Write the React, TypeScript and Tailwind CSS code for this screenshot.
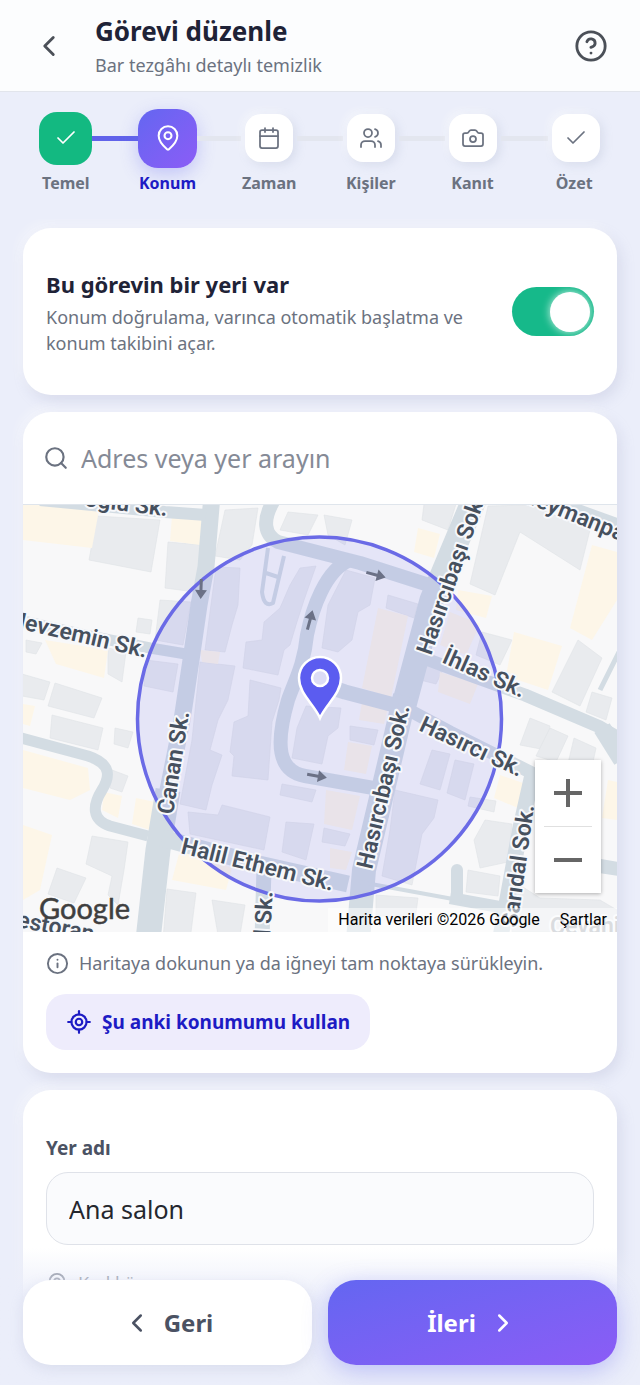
import React, { useState } from 'react';
import {
  Calendar,
  Camera,
  Check,
  ChevronLeft,
  ChevronRight,
  CircleHelp,
  Info,
  LocateFixed,
  MapPin,
  Search,
  Users,
} from 'lucide-react';

const steps = [
  { name: 'Temel', icon: Check, state: 'done' },
  { name: 'Konum', icon: MapPin, state: 'active' },
  { name: 'Zaman', icon: Calendar, state: 'todo' },
  { name: 'Kişiler', icon: Users, state: 'todo' },
  { name: 'Kanıt', icon: Camera, state: 'todo' },
  { name: 'Özet', icon: Check, state: 'todo' },
];

const boxStyles: Record<string, string> = {
  done: 'size-[53px] rounded-[18px] bg-[#13b981] text-white',
  active:
    'size-[59px] rounded-[20px] bg-linear-to-br from-[#6366f1] to-[#8b5cf6] text-white shadow-[0_6px_18px_rgba(99,102,241,0.3)]',
  todo: 'size-12 rounded-2xl bg-white text-[#6b7280] shadow-[3px_3px_10px_rgba(160,170,200,0.25),-3px_-3px_8px_rgba(255,255,255,0.5)]',
};

const card =
  'rounded-[28px] bg-white shadow-[4px_6px_14px_rgba(150,155,190,0.22),-4px_-4px_12px_rgba(255,255,255,0.45)]';

// Street centre lines
const streets = [
  { d: 'M212 495 L206 567 L199 605 L191 660 L182 720 L166 800', width: 17 },
  { d: 'M168 790 L158 850 L148 940', width: 25 },
  { d: 'M274 500 C262 520 264 535 278 542 L360 563 L432 586', width: 14 },
  { d: 'M474 500 L432 600 L404 705', width: 25 },
  { d: 'M405 696 L390 760 L364 870 L358 940', width: 24 },
  { d: 'M350 560 C325 570 312 610 307 635 C304 665 295 680 288 700 C275 745 278 771 305 776 L385 790', width: 14 },
  { d: 'M302 678 L345 692 L398 706', width: 15 },
  { d: 'M418 656 L450 668 L525 695 L600 727 L625 742', width: 13 },
  { d: 'M405 708 L450 732 L538 776', width: 13 },
  { d: 'M602 728 L622 760', width: 18 },
  { d: 'M534 768 L520 830 L500 940', width: 16 },
  { d: 'M162 838 L250 862 L348 884', width: 17 },
  { d: 'M360 882 L453 899', width: 4 },
  { d: 'M450 898 L505 908', width: 12 },
  { d: 'M457 870 L457 898', width: 12, cap: 'round' as const },
  { d: 'M10 618 L90 636 L150 648 L186 654', width: 11 },
  { d: 'M10 735 L88 756 C112 764 110 777 102 790 C92 806 92 820 110 826 L148 836', width: 11 },
  { d: 'M40 500 L165 512 L206 515', width: 12 },
  { d: 'M520 490 L630 530', width: 14 },
  { d: 'M264 868 L262 940', width: 15 },
  { d: 'M625 640 L600 690', width: 5 },
  { d: 'M600 866 L625 870', width: 14 },
];

const buildings = [
  'M97 516 L160 520 L151 572 L89 560 Z',
  'M168 542 L202 545 L195 592 L165 588 Z',
  'M225 510 L258 508 L252 545 L240 560 L215 556 Z',
  'M160 600 L191 602 L183 645 L155 640 Z',
  'M216 567 L240 568 L238 605 L232 625 L225 652 L205 650 Z',
  'M288 512 L318 515 L308 535 L280 530 Z',
  'M138 618 L152 620 L150 634 L136 632 Z',
  'M26 640 L42 643 L36 654 L26 652 Z',
  'M108 648 L126 652 L122 682 L108 674 Z',
  'M22 674 L50 682 L44 700 L22 696 Z',
  'M55 683 L102 698 L94 718 L48 706 Z',
  'M52 715 L103 728 L98 750 L50 738 Z',
  'M146 660 L178 664 L173 692 L144 686 Z',
  'M200 662 L235 666 L228 700 L218 720 L210 750 L222 755 L212 785 L206 810 L180 804 L192 740 Z',
  'M300 568 L316 566 L304 600 L296 625 L290 645 L284 650 L278 675 L243 668 L246 642 L262 640 L264 622 L280 608 L290 585 Z',
  'M250 680 L281 688 L279 700 L272 722 L268 780 L232 776 L234 756 L230 752 L234 722 L248 716 Z',
  'M306 706 L341 708 L338 728 L328 736 L322 764 L292 758 L297 728 Z',
  'M115 728 L133 732 L128 748 L114 744 Z',
  'M112 770 L128 776 L122 792 L110 788 Z',
  'M92 836 L128 842 L124 870 L118 905 L108 895 L112 876 L86 864 Z',
  'M57 868 L86 878 L74 903 L48 894 Z',
  'M188 812 L218 815 L222 805 L270 817 L264 850 L190 834 Z',
  'M167 889 L196 893 L190 940 L163 940 Z',
  'M212 900 L245 905 L240 935 L218 935 Z',
  'M282 784 L316 790 L312 802 L280 795 Z',
  'M286 822 L314 824 L306 860 L282 852 Z',
  'M346 570 L375 578 L370 605 L358 612 L352 640 L338 652 L322 648 L328 605 Z',
  'M388 595 L418 604 L414 618 L386 608 Z',
  'M424 504 L456 504 L448 530 L422 520 Z',
  'M488 506 L530 505 L590 530 L580 570 L520 532 L495 595 L470 584 Z',
  'M324 515 L352 520 L345 545 L328 535 Z',
  'M482 632 L512 640 L500 665 L476 655 Z',
  'M578 640 L602 658 L580 706 L552 692 Z',
  'M592 692 L612 698 L606 720 L586 712 Z',
  'M530 718 L550 726 L546 750 L520 745 Z',
  'M550 728 L568 736 L556 762 L536 756 Z',
  'M574 738 L596 748 L590 776 L566 772 Z',
  'M432 750 L450 754 L440 790 L420 784 Z',
  'M455 760 L474 764 L465 800 L447 793 Z',
  'M470 797 L496 801 L494 812 L468 806 Z',
  'M395 790 L438 800 L434 818 L422 834 L412 885 L382 876 L390 830 Z',
  'M485 820 L512 824 L508 862 L480 868 L474 840 Z',
  'M468 870 L500 876 L498 896 L466 892 Z',
  'M350 726 L378 730 L374 745 L350 740 Z',
  'M424 665 L444 668 L436 684 L420 680 Z',
  'M324 828 L350 834 L345 846 L322 842 Z',
  'M376 895 L418 898 L415 920 L376 915 Z',
  'M512 880 L540 898 L600 900 L617 910 L617 932 L512 932 Z',
];

const shops = [
  'M23 505 L100 505 L92 548 L23 540 Z',
  'M172 516 L202 518 L200 545 L170 541 Z',
  'M45 640 L108 650 L104 678 L56 664 Z',
  'M23 704 L35 706 L30 726 L23 724 Z',
  'M23 750 L88 768 L90 790 L70 800 L23 788 Z',
  'M23 825 L52 835 L40 890 L23 900 Z',
  'M104 792 L122 796 L118 818 L102 810 Z',
  'M136 798 L155 802 L150 830 L132 824 Z',
  'M180 850 L232 868 L226 890 L172 880 Z',
  'M200 650 L220 652 L218 664 L202 662 Z',
  'M378 608 L408 616 L391 698 L362 688 Z',
  'M418 528 L440 534 L434 558 L414 552 Z',
  'M458 590 L492 596 L486 618 L456 610 Z',
  'M450 612 L480 624 L466 655 L440 645 Z',
  'M514 632 L562 646 L548 690 L506 676 Z',
  'M592 545 L617 552 L617 600 L592 640 L570 628 Z',
  'M500 775 L526 784 L518 808 L494 798 Z',
  'M608 780 L617 782 L617 820 L602 818 Z',
  'M440 672 L478 684 L470 704 L438 692 Z',
  'M326 790 L360 796 L352 830 L324 824 Z',
  'M330 848 L352 852 L346 870 L330 868 Z',
  'M362 702 L388 708 L384 724 L359 720 Z',
  'M348 742 L372 746 L366 774 L344 770 Z',
];

const mapLabels = [
  { text: 'oğlu Sk.', x: 84, y: 506, angle: 7 },
  { text: 'Nevzemin Sk.', x: 8, y: 626, angle: 13 },
  { text: 'Canan Sk.', x: 173, y: 815, angle: -81 },
  { text: 'Halil Ethem Sk.', x: 180, y: 853, angle: 14 },
  { text: 'ıl Sk.', x: 270, y: 942, angle: -87 },
  { text: 'Hasırcıbaşı Sok.', x: 431, y: 656, angle: -71 },
  { text: 'Hasırcıbaşı Sok.', x: 372, y: 870, angle: -77 },
  { text: 'İhlas Sk.', x: 441, y: 662, angle: 24 },
  { text: 'Hasırcı Sk.', x: 418, y: 730, angle: 25 },
  { text: 'Sarıdal Sok.', x: 517, y: 928, angle: -82 },
  { text: 'Süleymanpaşa', x: 504, y: 494, angle: 22 },
  { text: 'Restoran', x: 2, y: 924, angle: 11 },
];

const arrows = [
  { x: 201, y: 589, angle: 92 },
  { x: 310, y: 620, angle: -75 },
  { x: 376, y: 575, angle: 15 },
  { x: 317, y: 776, angle: 10 },
];

function StreetMap() {
  return (
    <svg
      viewBox="23 505 594 427"
      preserveAspectRatio="xMidYMid slice"
      className="block h-full w-full bg-[#f8f8f9]"
      role="img"
      aria-label="Harita"
    >
      <g fill="#e9ebee" stroke="#dfe2e6" strokeWidth="0.6">
        {buildings.map((d) => (
          <path key={d} d={d} />
        ))}
      </g>
      <g fill="#fdf6e8">
        {shops.map((d) => (
          <path key={d} d={d} />
        ))}
      </g>
      <g fill="none" stroke="#d3dce3" strokeLinejoin="round">
        {streets.map((street) => (
          <path key={street.d} d={street.d} strokeWidth={street.width} strokeLinecap={street.cap} />
        ))}
        <path d="M268 548 L262 592 Q264 608 273 603 L284 556 M266 573 L278 577" strokeWidth="4" />
      </g>

      <circle cx="319.5" cy="719" r="182" fill="#6366f1" fillOpacity="0.13" stroke="#6a6ae6" strokeWidth="3.5" />

      <g fill="#6b7186">
        {arrows.map((arrow) => (
          <path
            key={arrow.x}
            d="M-10 -1.5 H1 V-6 L10 0 L1 6 V1.5 H-10 Z"
            transform={`translate(${arrow.x} ${arrow.y}) rotate(${arrow.angle})`}
          />
        ))}
      </g>

      <g
        className="font-['Roboto',sans-serif] font-semibold"
        fontSize="23"
        fill="#46505e"
        stroke="#f7f8fb"
        strokeWidth="4"
        strokeLinejoin="round"
        paintOrder="stroke"
      >
        {mapLabels.map((label) => (
          <text key={label.text + label.x} transform={`translate(${label.x} ${label.y}) rotate(${label.angle})`}>
            {label.text}
          </text>
        ))}
        <text x="550" y="934" fill="#b4b8bf">
          Cevahir
        </text>
      </g>

      <path
        d="M320 718 C314 704 299 694 299 678 A21 21 0 0 1 341 678 C341 694 326 704 320 718 Z"
        fill="#5b5cf0"
        stroke="#fff"
        strokeWidth="2.5"
      />
      <circle cx="320" cy="678" r="8" fill="#dcdcf6" stroke="#fff" strokeWidth="2.5" />
    </svg>
  );
}

// The line between two steps is split in two halves, one in each cell
function lineStyle(index: number, side: 'left' | 'right') {
  const hidden = (index === 0 && side === 'left') || (index === steps.length - 1 && side === 'right');
  if (hidden) return 'flex-1';
  const gap = index > 1 ? (side === 'left' ? 'mr-1' : 'ml-1') : '';
  const reached = (index === 0 && side === 'right') || (index === 1 && side === 'left');
  return `h-[5px] flex-1 ${gap} ${reached ? 'bg-[#6163ea]' : 'bg-[#e3e6ef]'}`;
}

export default function App() {
  const [hasPlace, setHasPlace] = useState(true);
  const [place, setPlace] = useState('Ana salon');

  return (
    <div className="relative flex h-dvh flex-col overflow-hidden bg-[#ebeefa] font-['Noto_Sans',sans-serif] text-[#1f2337]">
      <header className="flex h-[92px] shrink-0 items-center border-b border-[#e2e5ec] bg-[#fcfdfe] px-8">
        <button type="button" aria-label="Geri dön" className="flex w-[34px] justify-center text-[#4b5058]">
          <ChevronLeft size={34} strokeWidth={2} />
        </button>
        <div className="ml-[29px] flex-1 pt-[2px]">
          <h1 className="text-[26px] leading-9 font-bold">Görevi düzenle</h1>
          <p className="text-[18px] leading-8 text-[#6b7280]">Bar tezgâhı detaylı temizlik</p>
        </div>
        <button type="button" aria-label="Yardım" className="text-[#4b5058]">
          <CircleHelp size={34} strokeWidth={2} />
        </button>
      </header>

      <ol className="mx-[15px] grid shrink-0 grid-cols-6 pt-4">
        {steps.map((step, index) => {
          const Icon = step.icon;
          return (
            <li key={step.name} className="flex flex-col items-center">
              <div className="flex h-[60px] w-full items-center">
                <div className={lineStyle(index, 'left')} />
                <div className={`flex shrink-0 items-center justify-center ${boxStyles[step.state]}`}>
                  <Icon size={step.state === 'active' ? 28 : 24} strokeWidth={1.75} />
                </div>
                <div className={lineStyle(index, 'right')} />
              </div>
              <span
                className={`mt-[3px] text-base leading-6 font-bold ${
                  step.state === 'active' ? 'text-[#1d1bc4]' : 'text-[#6b7280]'
                }`}
              >
                {step.name}
              </span>
            </li>
          );
        })}
      </ol>

      <main className="mt-6 flex flex-1 flex-col gap-[17px] overflow-y-auto px-[23px] pt-[9px] pb-32 [scrollbar-width:none]">
        <section className={`flex h-[167px] shrink-0 items-center justify-between px-[23px] ${card}`}>
          <label htmlFor="has-place" className="max-w-[440px]">
            <span className="block text-[22px] leading-8 font-bold">Bu görevin bir yeri var</span>
            <span className="mt-1 block text-[18px] leading-[26px] text-[#6b7280]">
              Konum doğrulama, varınca otomatik başlatma ve konum takibini açar.
            </span>
          </label>
          <input
            id="has-place"
            type="checkbox"
            role="switch"
            checked={hasPlace}
            onChange={(e) => setHasPlace(e.target.checked)}
            className="flex h-[49px] w-[82px] shrink-0 appearance-none items-center rounded-full bg-slate-300 px-1 before:size-10 before:rounded-full before:bg-white before:shadow-[0_0_8px_rgba(255,255,255,0.8)] checked:justify-end checked:bg-[#16b98a]"
          />
        </section>

        <section className={`shrink-0 overflow-hidden ${card}`}>
          <div className="flex h-[93px] items-center gap-3 border-b border-[#dfe5ec] px-5">
            <Search size={26} className="text-[#6b7280]" />
            <input
              type="search"
              aria-label="Adres veya yer arayın"
              placeholder="Adres veya yer arayın"
              className="min-w-0 flex-1 bg-transparent text-[25px] leading-9 outline-none placeholder:text-[#858a96]"
            />
          </div>

          <div className="relative h-[427px]">
            <StreetMap />
            <div className="absolute right-4 bottom-[39px] flex w-[66px] flex-col items-center bg-white text-[#666] shadow-[0_1px_4px_rgba(0,0,0,0.3)]">
              <button type="button" aria-label="Yakınlaştır" className="flex h-[66px] w-full items-center justify-center">
                <svg width="28" height="28" stroke="currentColor" strokeWidth="4">
                  <path d="M0 14 H28 M14 0 V28" />
                </svg>
              </button>
              <div className="h-px w-12 bg-[#e0e0e0]" />
              <button type="button" aria-label="Uzaklaştır" className="flex h-[66px] w-full items-center justify-center">
                <svg width="28" height="28" stroke="currentColor" strokeWidth="4">
                  <path d="M0 14 H28" />
                </svg>
              </button>
            </div>
            <span className="absolute bottom-[6px] left-4 font-['Lato',sans-serif] text-[29px] leading-9 text-[#3f3f3f] [-webkit-text-stroke:0.5px_#3f3f3f]">
              Google
            </span>
            <div className="absolute right-0 bottom-0 flex gap-5 bg-white/50 px-[10px] font-['Roboto',sans-serif] text-base leading-6 text-black">
              <span>Harita verileri ©2026 Google</span>
              <a href="#sartlar">Şartlar</a>
            </div>
          </div>

          <div className="px-[23px] pt-[15px] pb-[23px]">
            <p className="flex items-center gap-[10px] text-[18px] leading-8 text-[#6b7280]">
              <Info size={23} />
              Haritaya dokunun ya da iğneyi tam noktaya sürükleyin.
            </p>
            <button
              type="button"
              className="mt-[15px] flex h-14 items-center gap-[10px] rounded-[20px] bg-[#eeecfc] px-5 text-[19px] font-bold text-[#1d1bc4]"
            >
              <LocateFixed size={26} />
              Şu anki konumumu kullan
            </button>
          </div>
        </section>

        <section className={`shrink-0 px-[23px] pt-[42px] pb-10 ${card}`}>
          <label htmlFor="place" className="block text-[19px] leading-8 font-bold text-[#4b5263]">
            Yer adı
          </label>
          <input
            id="place"
            type="text"
            value={place}
            onChange={(e) => setPlace(e.target.value)}
            className="mt-2 h-[73px] w-full rounded-[22px] border border-[#dfe2e9] bg-[#fafbfd] px-[22px] text-[25px] text-[#24272e] outline-none"
          />
          <p className="mt-[22px] flex items-center gap-[10px] text-[18px] leading-8 text-[#6b7280]">
            <MapPin size={22} />
            Kadıköy
          </p>
        </section>
      </main>

      <footer className="absolute inset-x-0 bottom-0 grid grid-cols-2 gap-4 bg-linear-to-b from-[#ebeefa]/0 to-[#ebeefa] to-40% px-[23px] pt-8 pb-5">
        <button
          type="button"
          className="flex h-[85px] items-center justify-center gap-3 rounded-[28px] bg-white text-2xl font-bold text-[#4b5263] shadow-[0_4px_14px_rgba(150,155,190,0.2)]"
        >
          <ChevronLeft size={30} />
          Geri
        </button>
        <button
          type="button"
          className="flex h-[85px] items-center justify-center gap-3 rounded-[28px] bg-linear-to-br from-[#6366f1] to-[#8b5cf6] text-2xl font-bold text-white shadow-[0_6px_24px_rgba(99,102,241,0.35)]"
        >
          İleri
          <ChevronRight size={30} />
        </button>
      </footer>
    </div>
  );
}
